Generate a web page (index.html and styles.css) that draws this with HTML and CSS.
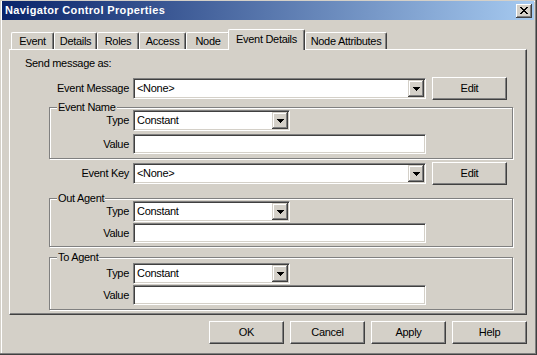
FILE: index.html
```html
<!DOCTYPE html>
<html lang="en">
	<head>
		<title>Navigator Control Properties</title>
		<link rel="stylesheet" href="styles.css">
	</head>
	<body>
		<div class="window">
			<div class="titlebar">
				<span class="title">Navigator Control Properties</span>
				<span class="close-btn">
					<svg width="8" height="7" viewBox="0 0 8 7" shape-rendering="crispEdges"><path d="M0 0h2v1h-2zM6 0h2v1h-2zM1 1h2v1h-2zM5 1h2v1h-2zM2 2h4v1h-4zM3 3h2v1h-2zM2 4h4v1h-4zM1 5h2v1h-2zM5 5h2v1h-2zM0 6h2v1h-2zM6 6h2v1h-2z"/></svg>
				</span>
			</div>
			<div class="dialog-body">
				<div class="tabs">
					<div class="tab" style="width: 43px">Event</div>
					<div class="tab" style="width: 43px">Details</div>
					<div class="tab" style="width: 42px">Roles</div>
					<div class="tab" style="width: 47px">Access</div>
					<div class="tab" style="width: 44px">Node</div>
					<div class="tab active" style="width: 77px">Event Details</div>
					<div class="tab" style="width: 82px">Node Attributes</div>
				</div>
				<div class="panel">
					<div class="intro">Send message as:</div>

					<div class="row row-msg">
						<span class="label">Event Message</span>
						<div class="combo wide">
							<span class="combo-text">&lt;None&gt;</span>
							<span class="drop-btn"><svg width="7" height="4" viewBox="0 0 7 4" shape-rendering="crispEdges"><path d="M0 0h7v1h-1v1h-1v1h-1v1h-1v-1h-1v-1h-1v-1h-1z"/></svg></span>
						</div>
						<span class="btn edit">Edit</span>
					</div>

					<div class="group group-name">
						<div class="group-title">Event Name</div>
						<div class="row type-row">
							<span class="label">Type</span>
							<div class="combo narrow">
								<span class="combo-text">Constant</span>
								<span class="drop-btn"><svg width="7" height="4" viewBox="0 0 7 4" shape-rendering="crispEdges"><path d="M0 0h7v1h-1v1h-1v1h-1v1h-1v-1h-1v-1h-1v-1h-1z"/></svg></span>
							</div>
						</div>
						<div class="row value-row">
							<span class="label">Value</span>
							<div class="textbox"></div>
						</div>
					</div>

					<div class="row row-key">
						<span class="label">Event Key</span>
						<div class="combo wide">
							<span class="combo-text">&lt;None&gt;</span>
							<span class="drop-btn"><svg width="7" height="4" viewBox="0 0 7 4" shape-rendering="crispEdges"><path d="M0 0h7v1h-1v1h-1v1h-1v1h-1v-1h-1v-1h-1v-1h-1z"/></svg></span>
						</div>
						<span class="btn edit">Edit</span>
					</div>

					<div class="group group-out">
						<div class="group-title">Out Agent</div>
						<div class="row type-row">
							<span class="label">Type</span>
							<div class="combo narrow">
								<span class="combo-text">Constant</span>
								<span class="drop-btn"><svg width="7" height="4" viewBox="0 0 7 4" shape-rendering="crispEdges"><path d="M0 0h7v1h-1v1h-1v1h-1v1h-1v-1h-1v-1h-1v-1h-1z"/></svg></span>
							</div>
						</div>
						<div class="row value-row">
							<span class="label">Value</span>
							<div class="textbox"></div>
						</div>
					</div>

					<div class="group group-to">
						<div class="group-title">To Agent</div>
						<div class="row type-row">
							<span class="label">Type</span>
							<div class="combo narrow">
								<span class="combo-text">Constant</span>
								<span class="drop-btn"><svg width="7" height="4" viewBox="0 0 7 4" shape-rendering="crispEdges"><path d="M0 0h7v1h-1v1h-1v1h-1v1h-1v-1h-1v-1h-1v-1h-1z"/></svg></span>
							</div>
						</div>
						<div class="row value-row">
							<span class="label">Value</span>
							<div class="textbox"></div>
						</div>
					</div>
				</div>
				<div class="buttons">
					<span class="btn">OK</span>
					<span class="btn">Cancel</span>
					<span class="btn">Apply</span>
					<span class="btn">Help</span>
				</div>
			</div>
		</div>
	</body>
</html>
```

FILE: styles.css
```css
html, body {
	margin: 0;
	padding: 0;
	background: #d4d0c8;
}
body {
	font-family: "Liberation Sans", Arial, sans-serif;
	font-size: 11px;
	line-height: 13px;
	letter-spacing: -0.3px;
	color: #000;
}
.window {
	box-sizing: border-box;
	width: 537px;
	height: 355px;
	padding: 1px 3px 2px 2px;
	background: #d4d0c8;
	box-shadow: inset -1px -1px #404040, inset -2px -2px #808080, inset 1px 1px #d4d0c8, inset 2px 2px #fff;
}
.titlebar {
	height: 19px;
	display: flex;
	align-items: center;
	padding: 0 2px 0 3px;
	background: linear-gradient(to right, #0a246a, #a6caf0);
}
.title {
	color: #fff;
	font-weight: bold;
	letter-spacing: 0.35px;
}
.close-btn {
	margin-left: auto;
	width: 16px;
	height: 14px;
	display: flex;
	align-items: center;
	justify-content: center;
	background: #d4d0c8;
	box-shadow: inset -1px -1px #404040, inset 1px 1px #fff, inset -2px -2px #808080;
}
.dialog-body {
	padding: 9px 7px 0 7px;
}
.tabs {
	display: flex;
	align-items: flex-end;
	height: 20px;
	padding-left: 2px;
	position: relative;
	z-index: 1;
}
.tab {
	box-sizing: border-box;
	height: 17px;
	padding-top: 2px;
	text-align: center;
	border-top: 1px solid #fff;
	border-left: 1px solid #fff;
	border-right: 1px solid #404040;
	border-radius: 2px 2px 0 0;
	box-shadow: inset -1px 0 #808080;
	white-space: nowrap;
}
.tab.active {
	height: 21px;
	padding-top: 3px;
	margin-left: -2px;
	margin-bottom: -1px;
	background: #d4d0c8;
}
.panel {
	box-sizing: border-box;
	height: 266px;
	padding: 7px 0 0 15px;
	border-top: 1px solid #fff;
	border-left: 1px solid #fff;
	border-right: 1px solid #404040;
	border-bottom: 1px solid #404040;
	box-shadow: inset -1px -1px #808080;
}
.row {
	display: flex;
	align-items: center;
}
.row-msg {
	height: 23px;
	margin-top: 7px;
}
.row-key {
	height: 23px;
	margin-top: 3px;
}
.label {
	width: 104px;
	margin-right: 4px;
	text-align: right;
	white-space: nowrap;
}
.group .label {
	width: 79px;
}
.combo {
	box-sizing: border-box;
	height: 21px;
	display: flex;
	padding: 1px;
	background: #fff;
	border: 1px solid;
	border-color: #808080 #fff #fff #808080;
	box-shadow: inset 1px 1px #404040, inset -1px -1px #d4d0c8;
}
.combo.wide {
	width: 293px;
}
.combo.narrow {
	width: 157px;
}
.combo-text {
	flex: 1;
	padding-left: 2px;
	line-height: 17px;
}
.drop-btn {
	width: 16px;
	height: 17px;
	display: flex;
	align-items: center;
	justify-content: center;
	background: #d4d0c8;
	box-shadow: inset -1px -1px #404040, inset 1px 1px #d4d0c8, inset -2px -2px #808080, inset 2px 2px #fff;
}
.textbox {
	box-sizing: border-box;
	width: 293px;
	height: 20px;
	background: #fff;
	border: 1px solid;
	border-color: #808080 #fff #fff #808080;
	box-shadow: inset 1px 1px #404040, inset -1px -1px #d4d0c8;
}
.btn {
	box-sizing: border-box;
	width: 75px;
	height: 23px;
	display: flex;
	align-items: center;
	justify-content: center;
	background: #d4d0c8;
	border: 1px solid;
	border-color: #fff #404040 #404040 #fff;
	box-shadow: inset -1px -1px #808080;
}
.btn.edit {
	margin-left: 6px;
}
.group {
	box-sizing: border-box;
	width: 464px;
	margin-left: 24px;
	border: 1px solid #808080;
	box-shadow: inset 1px 1px #fff, 1px 1px #fff;
}
.group-title {
	width: fit-content;
	margin: -7px 0 -6px 7px;
	padding: 0 1px;
	background: #d4d0c8;
}
.group-name {
	margin-top: 7px;
	padding-bottom: 4px;
}
.group-name .type-row {
	margin-top: 2px;
}
.group-name .value-row {
	margin-top: 3px;
}
.group-out {
	margin-top: 13px;
	padding-bottom: 3px;
}
.group-out .type-row {
	margin-top: 2px;
}
.group-out .value-row {
	margin-top: 1px;
}
.group-to {
	margin-top: 10px;
	padding-bottom: 4px;
}
.group-to .type-row {
	margin-top: 5px;
}
.group-to .value-row {
	margin-top: 1px;
}
.buttons {
	display: flex;
	justify-content: flex-end;
	gap: 6px;
	margin-top: 6px;
}
```
